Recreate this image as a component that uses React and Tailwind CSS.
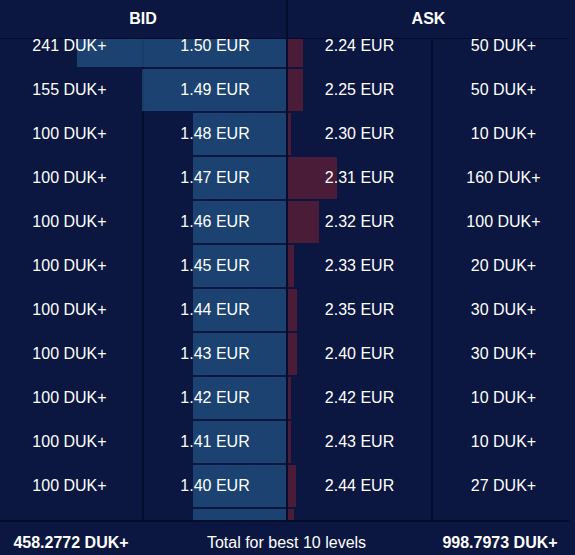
import React from "react";

const rows = [
  { bq: "241 DUK+", bp: "1.50 EUR", bw: 209, ap: "2.24 EUR", aq: "50 DUK+", aw: 15 },
  { bq: "155 DUK+", bp: "1.49 EUR", bw: 144, ap: "2.25 EUR", aq: "50 DUK+", aw: 15 },
  { bq: "100 DUK+", bp: "1.48 EUR", bw: 93, ap: "2.30 EUR", aq: "10 DUK+", aw: 3 },
  { bq: "100 DUK+", bp: "1.47 EUR", bw: 93, ap: "2.31 EUR", aq: "160 DUK+", aw: 49 },
  { bq: "100 DUK+", bp: "1.46 EUR", bw: 93, ap: "2.32 EUR", aq: "100 DUK+", aw: 31 },
  { bq: "100 DUK+", bp: "1.45 EUR", bw: 93, ap: "2.33 EUR", aq: "20 DUK+", aw: 6 },
  { bq: "100 DUK+", bp: "1.44 EUR", bw: 93, ap: "2.35 EUR", aq: "30 DUK+", aw: 9 },
  { bq: "100 DUK+", bp: "1.43 EUR", bw: 93, ap: "2.40 EUR", aq: "30 DUK+", aw: 9 },
  { bq: "100 DUK+", bp: "1.42 EUR", bw: 93, ap: "2.42 EUR", aq: "10 DUK+", aw: 3 },
  { bq: "100 DUK+", bp: "1.41 EUR", bw: 93, ap: "2.43 EUR", aq: "10 DUK+", aw: 3 },
  { bq: "100 DUK+", bp: "1.40 EUR", bw: 93, ap: "2.44 EUR", aq: "27 DUK+", aw: 8 },
  { bq: "100 DUK+", bp: "1.39 EUR", bw: 93, ap: "2.45 EUR", aq: "20 DUK+", aw: 6 },
];

function Row({ r }) {
  return (
    <div className="flex h-[44px]">
      <div className="relative flex w-[286px]">
        <div className="w-[142px] h-[44px] shrink-0" />
        <div className="w-[2px] h-[44px] shrink-0 bg-[#050d2e]" />
        <div
          className="absolute right-0 top-0 h-[42px] bg-[rgba(43,110,160,0.5)]"
          style={{ width: r.bw }}
        />
        <div className="absolute left-0 top-0 h-[42px] w-[142px] pr-[3px] flex items-center justify-center">
          {r.bq}
        </div>
        <div className="relative w-[142px] h-[42px] shrink-0 flex items-center justify-center">
          {r.bp}
        </div>
      </div>
      <div className="w-[2px] h-[44px] shrink-0 bg-[#050d2e]" />
      <div className="relative w-[143px] h-[42px] shrink-0 flex items-center justify-center">
        <div
          className="absolute left-0 top-0 h-[42px] bg-[#4b1c38]"
          style={{ width: r.aw }}
        />
        <span className="relative">{r.ap}</span>
      </div>
      <div className="w-[2px] h-[44px] shrink-0 bg-[#050d2e]" />
      <div className="w-[136px] h-[42px] shrink-0 pl-[5px] flex items-center justify-center">
        {r.aq}
      </div>
    </div>
  );
}

export default function App() {
  return (
    <div className="w-[575px] h-[555px] overflow-hidden bg-[#0b1740] text-white text-[16px] font-['Liberation_Sans',Arial,sans-serif]">
      <div className="flex w-[569px] h-[39px] border-b border-[#050d2e]">
        <div className="w-[286px] flex items-center justify-center font-bold pb-[1px]">
          BID
        </div>
        <div className="w-[2px] bg-[#050d2e]" />
        <div className="flex-1 flex items-center justify-center font-bold pb-[1px]">
          ASK
        </div>
      </div>
      <div className="w-[569px] h-[481px] overflow-hidden">
        <div className="-mt-[14px]">
          {rows.map((r, i) => (
            <Row key={i} r={r} />
          ))}
        </div>
      </div>
      <div className="flex w-[569px] h-[44px] border-t-2 border-[#050d2e]">
        <div className="w-[142px] flex items-center justify-center font-bold">
          458.2772 DUK+
        </div>
        <div className="w-[289px] flex items-center justify-center">
          Total for best 10 levels
        </div>
        <div className="flex-1 flex items-center justify-center font-bold">
          998.7973 DUK+
        </div>
      </div>
    </div>
  );
}
